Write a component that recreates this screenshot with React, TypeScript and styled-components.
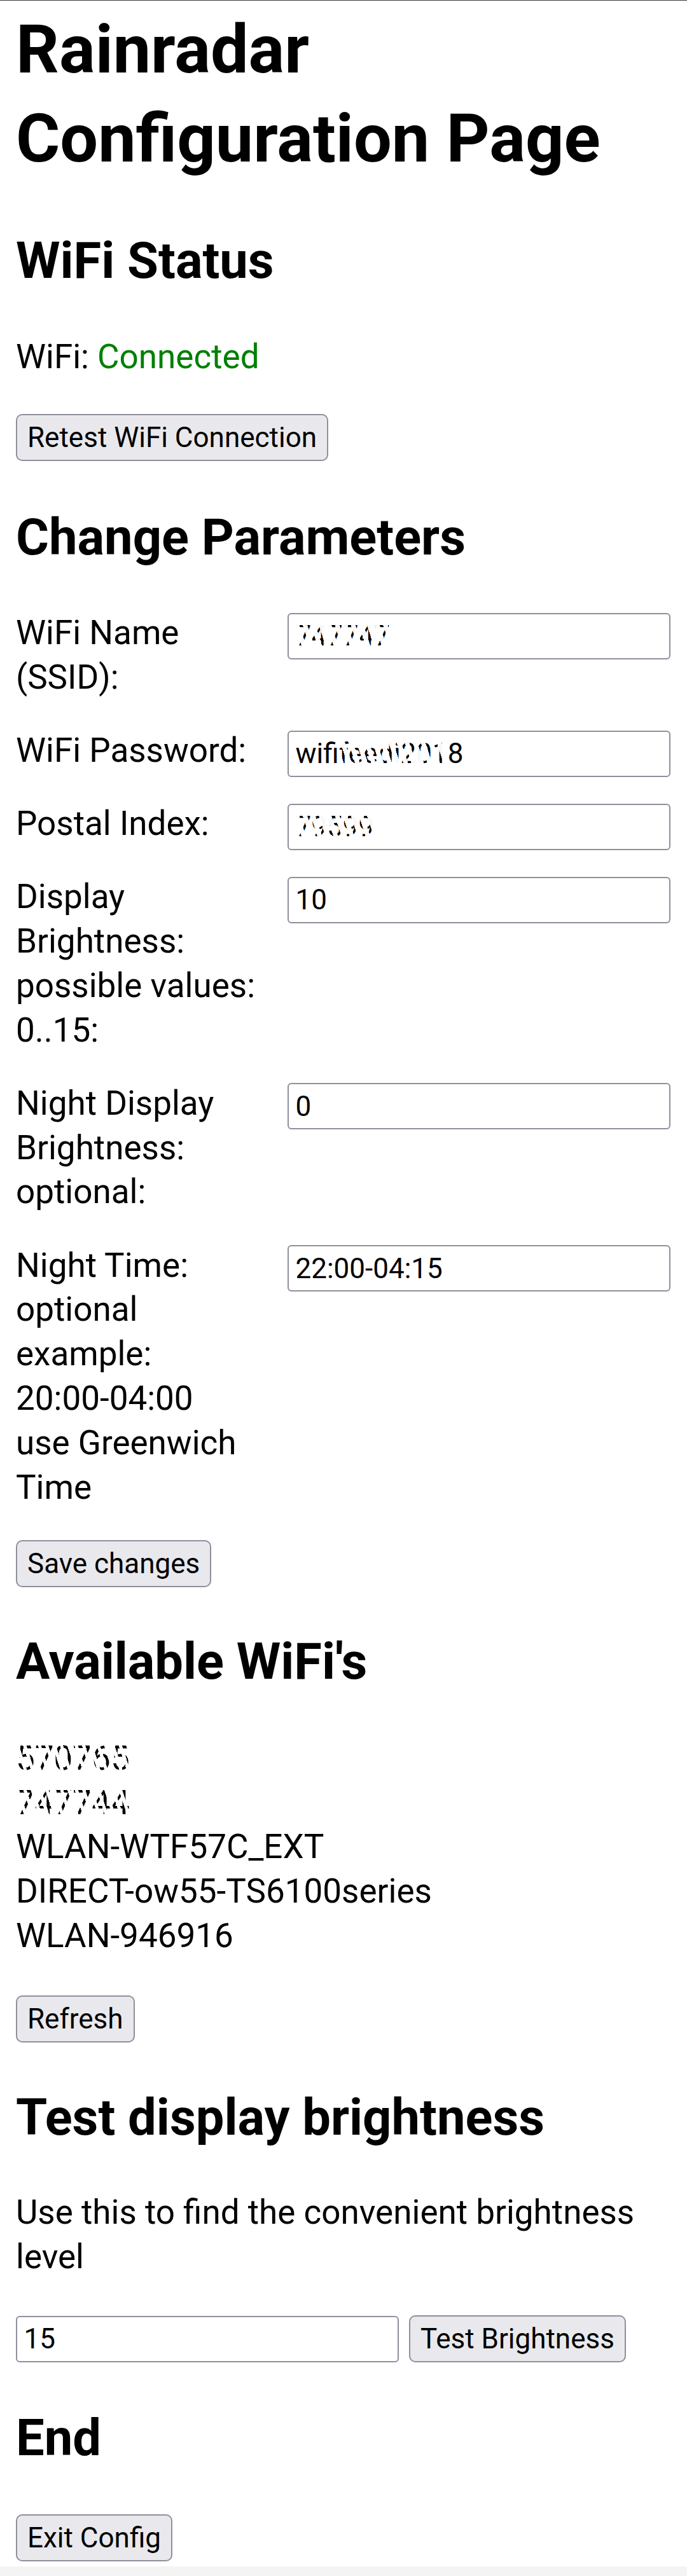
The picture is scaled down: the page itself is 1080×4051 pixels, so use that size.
import React from "react";
import styled, { createGlobalStyle } from "styled-components";

const GlobalStyle = createGlobalStyle`
  html {
    border-top: 1px solid #3a3a3a;
    background: #fff;
  }
  body {
    margin: 0 25px;
    font-family: Roboto, "Noto Sans", Arial, sans-serif;
    font-size: 53px;
    line-height: 69.8px;
    color: #000;
  }
`;

const Title = styled.h1`
  font-size: 106px;
  line-height: 140.5px;
  font-weight: 700;
  margin: 6.5px 0 0;
`;

const Heading = styled.h2<{ $top: number; $bottom: number }>`
  font-size: 79.5px;
  line-height: 104.5px;
  font-weight: 700;
  margin: ${(p) => p.$top}px 0 ${(p) => p.$bottom}px;
`;

const Text = styled.p<{ $bottom: number }>`
  margin: 0 0 ${(p) => p.$bottom}px;
`;

const Status = styled.span`
  color: green;
`;

const Button = styled.button<{ $block?: boolean }>`
  display: ${(p) => (p.$block ? "block" : "inline-block")};
  box-sizing: border-box;
  height: 74px;
  padding: 0 16px;
  font-family: Roboto, "Noto Sans", Arial, sans-serif;
  font-size: 44px;
  color: #000;
  background: #e9e9ed;
  border: 2.5px solid #8f8f9d;
  border-radius: 10px;
  flex-shrink: 0;
`;

const Form = styled.div`
  display: grid;
  grid-template-columns: 405px 602px;
  column-gap: 22px;
  row-gap: 45.3px;
  align-items: start;
  margin-bottom: 48px;
`;

const Label = styled.label`
  display: block;
`;

const Field = styled.div`
  position: relative;
  margin-top: 2.6px;
  margin-bottom: -6px;
`;

const Input = styled.input`
  display: block;
  box-sizing: border-box;
  width: 602px;
  height: 73px;
  padding: 0 10.5px;
  font-family: Roboto, "Noto Sans", Arial, sans-serif;
  font-size: 44px;
  color: #000;
  background: #fff;
  border: 2.5px solid #8f8f9d;
  border-radius: 6px;
  outline: none;
`;

/* white streaks over the blanked out values */
const Smudge = styled.span<{ $left: number; $width: number }>`
  position: absolute;
  top: 14px;
  left: ${(p) => p.$left}px;
  width: ${(p) => p.$width}px;
  height: 46px;
  pointer-events: none;
  background: repeating-linear-gradient(
    72deg,
    rgba(255, 255, 255, 0.97) 0 7px,
    transparent 7px 12px
  );
`;

const NetworkList = styled.div`
  margin-bottom: 58px;
`;

const Network = styled.div<{ $hidden?: boolean }>`
  white-space: nowrap;
  ${(p) =>
    p.$hidden &&
    `
    display: table;
    -webkit-mask-image: repeating-linear-gradient(72deg, #000 0 6px, transparent 6px 11px);
    mask-image: repeating-linear-gradient(72deg, #000 0 6px, transparent 6px 11px);
  `}
`;

const TestRow = styled.div`
  display: flex;
  align-items: center;
  gap: 16px;
`;

const TestInput = styled(Input)`
  flex-shrink: 0;
`;

const BottomShade = styled.div`
  position: fixed;
  left: 0;
  right: 0;
  bottom: 0;
  height: 15px;
  background: #f4f4f4;
`;

type Param = {
  label: string[];
  value: string;
  smudge?: [number, number];
};

const params: Param[] = [
  { label: ["WiFi Name (SSID):"], value: "747747", smudge: [12, 150] },
  { label: ["WiFi Password:"], value: "wififeedi2018", smudge: [84, 170] },
  { label: ["Postal Index:"], value: "79599", smudge: [12, 125] },
  { label: ["Display Brightness:", "possible values:", "0..15:"], value: "10" },
  { label: ["Night Display Brightness:", "optional:"], value: "0" },
  {
    label: [
      "Night Time:",
      "optional",
      "example:",
      "20:00-04:00",
      "use Greenwich Time",
    ],
    value: "22:00-04:15",
  },
];

const networks = [
  { name: "570765", hidden: true },
  { name: "747744", hidden: true },
  { name: "WLAN-WTF57C_EXT" },
  { name: "DIRECT-ow55-TS6100series" },
  { name: "WLAN-946916" },
];

export default function App() {
  return (
    <>
      <GlobalStyle />
      <Title>Rainradar Configuration Page</Title>

      <Heading $top={69} $bottom={65}>
        WiFi Status
      </Heading>
      <Text $bottom={54}>
        WiFi: <Status>Connected</Status>
      </Text>
      <Button $block>Retest WiFi Connection</Button>

      <Heading $top={68} $bottom={64}>
        Change Parameters
      </Heading>
      <Form>
        {params.map((p) => (
          <React.Fragment key={p.value}>
            <Label>
              {p.label.map((line, i) => (
                <React.Fragment key={line}>
                  {i > 0 && <br />}
                  {line}
                </React.Fragment>
              ))}
            </Label>
            <Field>
              <Input readOnly value={p.value} />
              {p.smudge && <Smudge $left={p.smudge[0]} $width={p.smudge[1]} />}
            </Field>
          </React.Fragment>
        ))}
      </Form>
      <Button $block>Save changes</Button>

      <Heading $top={65} $bottom={65}>
        Available WiFi's
      </Heading>
      <NetworkList>
        {networks.map((n) => (
          <Network key={n.name} $hidden={n.hidden}>
            {n.name}
          </Network>
        ))}
      </NetworkList>
      <Button $block>Refresh</Button>

      <Heading $top={66.5} $bottom={62}>
        Test display brightness
      </Heading>
      <Text $bottom={57}>
        Use this to find the convenient brightness level
      </Text>
      <TestRow>
        <TestInput readOnly value="15" />
        <Button>Test Brightness</Button>
      </TestRow>

      <Heading $top={66.5} $bottom={68}>
        End
      </Heading>
      <Button $block>Exit Config</Button>
      <BottomShade />
    </>
  );
}
